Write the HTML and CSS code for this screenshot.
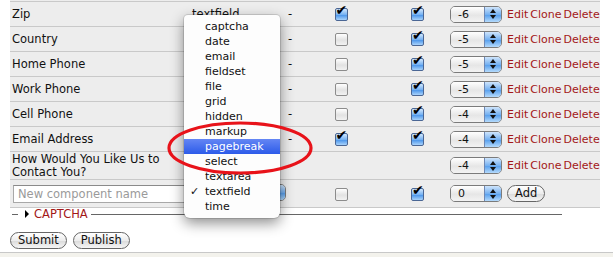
FILE: index.html
```html
<!DOCTYPE html>
<html lang="en">
<head>
    <meta charset="UTF-8">
    <title>Form Components</title>
    <link rel="stylesheet" href="styles.css">
</head>
<body>
<div class="page">
    <div class="components">
        <div class="row">
            <div class="label">Zip</div><div class="type">textfield</div><div class="dash">-</div>
            <div class="c1"><span class="cb on"></span></div><div class="c2"><span class="cb on"></span></div>
            <div class="acts"><span class="sel"><span class="sel-val">-6</span><span class="sel-btn"></span></span><span class="links"><a>Edit</a> <a>Clone</a> <a>Delete</a></span></div>
        </div>
        <div class="row">
            <div class="label">Country</div><div class="type"></div><div class="dash">-</div>
            <div class="c1"><span class="cb"></span></div><div class="c2"><span class="cb on"></span></div>
            <div class="acts"><span class="sel"><span class="sel-val">-5</span><span class="sel-btn"></span></span><span class="links"><a>Edit</a> <a>Clone</a> <a>Delete</a></span></div>
        </div>
        <div class="row">
            <div class="label">Home Phone</div><div class="type"></div><div class="dash">-</div>
            <div class="c1"><span class="cb"></span></div><div class="c2"><span class="cb on"></span></div>
            <div class="acts"><span class="sel"><span class="sel-val">-5</span><span class="sel-btn"></span></span><span class="links"><a>Edit</a> <a>Clone</a> <a>Delete</a></span></div>
        </div>
        <div class="row">
            <div class="label">Work Phone</div><div class="type"></div><div class="dash">-</div>
            <div class="c1"><span class="cb"></span></div><div class="c2"><span class="cb on"></span></div>
            <div class="acts"><span class="sel"><span class="sel-val">-5</span><span class="sel-btn"></span></span><span class="links"><a>Edit</a> <a>Clone</a> <a>Delete</a></span></div>
        </div>
        <div class="row">
            <div class="label">Cell Phone</div><div class="type"></div><div class="dash">-</div>
            <div class="c1"><span class="cb"></span></div><div class="c2"><span class="cb on"></span></div>
            <div class="acts"><span class="sel"><span class="sel-val">-4</span><span class="sel-btn"></span></span><span class="links"><a>Edit</a> <a>Clone</a> <a>Delete</a></span></div>
        </div>
        <div class="row">
            <div class="label">Email Address</div><div class="type"></div><div class="dash">-</div>
            <div class="c1"><span class="cb on"></span></div><div class="c2"><span class="cb on"></span></div>
            <div class="acts"><span class="sel"><span class="sel-val">-4</span><span class="sel-btn"></span></span><span class="links"><a>Edit</a> <a>Clone</a> <a>Delete</a></span></div>
        </div>
        <div class="row tall">
            <div class="label">How Would You Like Us to Contact You?</div><div class="type"></div><div class="dash"></div>
            <div class="c1"></div><div class="c2"></div>
            <div class="acts"><span class="sel"><span class="sel-val">-4</span><span class="sel-btn"></span></span><span class="links"><a>Edit</a> <a>Clone</a> <a>Delete</a></span></div>
        </div>
        <div class="row new">
            <div class="label"><input class="newname" type="text" placeholder="New component name"></div>
            <div class="type"><span class="sel wide"><span class="sel-val"></span><span class="sel-btn"></span></span></div>
            <div class="dash"></div>
            <div class="c1"><span class="cb"></span></div><div class="c2"><span class="cb on"></span></div>
            <div class="acts"><span class="sel"><span class="sel-val">0</span><span class="sel-btn"></span></span><button class="pill">Add</button></div>
        </div>
    </div>

    <div class="legend">
        <span class="rule short"></span>
        <span class="tri"></span>
        <span class="legend-text">CAPTCHA</span>
        <span class="rule long"></span>
    </div>

    <div class="actions">
        <button class="pill">Submit</button>
        <button class="pill">Publish</button>
    </div>

    <div class="menu">
        <div class="item">captcha</div>
        <div class="item">date</div>
        <div class="item">email</div>
        <div class="item">fieldset</div>
        <div class="item">file</div>
        <div class="item">grid</div>
        <div class="item">hidden</div>
        <div class="item">markup</div>
        <div class="item active">pagebreak</div>
        <div class="item">select</div>
        <div class="item">textarea</div>
        <div class="item checked">textfield</div>
        <div class="item">time</div>
    </div>

    <svg class="ring" width="150" height="56" viewBox="0 0 150 56">
        <ellipse cx="75" cy="28" rx="71" ry="25" fill="none" stroke="#e8131a" stroke-width="3.2"/>
    </svg>
</div>
<div class="statusbar"></div>
</body>
</html>
```

FILE: styles.css
```css
body {
    margin: 0;
    font-family: "DejaVu Sans", sans-serif;
    font-size: 11.5px;
    color: #111;
    background: #fff;
    overflow: hidden;
}
.page {
    position: relative;
    height: 252px;
}
.components {
    margin-left: 10px;
    width: 590px;
    background: #ededed;
    padding-top: 1px;
    border-bottom: 1px solid #c9c9c9;
}
.row {
    display: grid;
    grid-template-columns: 176px 96px 34px 50px 76px auto;
    align-items: center;
    height: 24px;
    border-top: 1px solid #c9c9c9;
}
.row.tall {
    height: 27px;
}
.row.new {
    height: 27px;
}
.label {
    padding-left: 2px;
    line-height: 13px;
}
.type {
    padding-left: 6px;
}
.dash {
    padding-left: 6px;
}
.c1 {
    text-align: center;
}
.c2 {
    padding-left: 45px;
}
.acts {
    display: flex;
    align-items: center;
    padding-left: 8px;
    gap: 5px;
}

/* checkboxes */
.cb {
    position: relative;
    display: inline-block;
    vertical-align: middle;
    width: 11px;
    height: 11px;
    border: 1px solid #8c8c8c;
    border-radius: 2px;
    background: linear-gradient(#ffffff, #e2e2e2 55%, #f2f2f2);
}
.cb.on {
    border-color: #4a6694;
    background: linear-gradient(#d4e8fd, #78b3f2 50%, #4b95ea 55%, #a9d3fb);
}
.cb.on::after {
    content: "\2714";
    position: absolute;
    left: 0;
    top: -6px;
    font-size: 14px;
    line-height: 14px;
    color: #000;
}

/* aqua selects */
.sel {
    display: inline-flex;
    width: 52px;
    height: 17px;
    box-sizing: border-box;
    border: 1px solid #7b7b7b;
    border-radius: 5px;
    overflow: hidden;
}
.sel.wide {
    width: 96px;
    margin-left: -2px;
}
.sel-val {
    flex: 1;
    padding-left: 7px;
    font-size: 11px;
    line-height: 15px;
    background: linear-gradient(#ffffff, #e6e6e6 55%, #f3f3f3);
}
.sel-btn {
    width: 16px;
    border-left: 1px solid #6d87b3;
    background: linear-gradient(#cfe5fc, #76b1f1 50%, #5aa1ee 55%, #b4dafc);
    display: flex;
    flex-direction: column;
    align-items: center;
    justify-content: center;
    gap: 2px;
}
.sel-btn::before {
    content: "";
    border-left: 3px solid transparent;
    border-right: 3px solid transparent;
    border-bottom: 4px solid #111;
}
.sel-btn::after {
    content: "";
    border-left: 3px solid transparent;
    border-right: 3px solid transparent;
    border-top: 4px solid #111;
}

.links {
    font-size: 11px;
    word-spacing: -1.5px;
    white-space: nowrap;
}
.links a {
    color: #a31717;
    word-spacing: 0;
}

.newname {
    box-sizing: border-box;
    width: 172px;
    height: 18px;
    margin: 0 0 0 1px;
    padding: 0 4px;
    border: 1px solid #a8a8a8;
    border-top-color: #8a8a8a;
    background: #fff;
    font-family: "DejaVu Sans", sans-serif;
    font-size: 11.5px;
}
.newname::placeholder {
    color: #9a9a9a;
}

.pill {
    height: 17px;
    padding: 0 7px;
    border: 1px solid #666;
    border-radius: 9px;
    background: linear-gradient(#ffffff, #ececec 50%, #dcdcdc 55%, #f6f6f6);
    font-family: "DejaVu Sans", sans-serif;
    font-size: 11.5px;
    line-height: 15px;
    color: #111;
}

/* collapsed fieldset */
.legend {
    display: flex;
    align-items: center;
    width: 552px;
    height: 12px;
    margin: 0 0 0 10px;
}
.rule {
    height: 1px;
    background: #666;
}
.rule.short {
    width: 6px;
    margin-left: 2px;
}
.rule.long {
    flex: 1;
    margin-left: 3px;
}
.tri {
    width: 0;
    height: 0;
    margin-left: 7px;
    border-left: 4px solid #000;
    border-top: 4px solid transparent;
    border-bottom: 4px solid transparent;
}
.legend-text {
    margin-left: 5px;
    color: #a31717;
    font-size: 11.5px;
}

.actions {
    display: flex;
    gap: 6px;
    margin: 12px 0 0 10px;
}

/* popup menu */
.menu {
    position: absolute;
    left: 184px;
    top: 15px;
    width: 96px;
    padding: 4px 0;
    background: #fdfdfd;
    border-radius: 4px 4px 6px 6px;
    box-shadow: 0 0 0 1px rgba(0, 0, 0, 0.12), 0 5px 14px rgba(0, 0, 0, 0.45);
}
.item {
    position: relative;
    height: 15px;
    line-height: 15px;
    padding-left: 21px;
    font-size: 11px;
    color: #111;
}
.item.active {
    background: linear-gradient(#6486f4, #2c5be9);
    color: #fff;
}
.item.checked::before {
    content: "\2713";
    position: absolute;
    left: 6px;
    font-size: 11px;
}

.ring {
    position: absolute;
    left: 165px;
    top: 120px;
}

.statusbar {
    height: 10px;
    border-top: 1px solid #c8c8c8;
    background: #f3f2ec;
}
```
